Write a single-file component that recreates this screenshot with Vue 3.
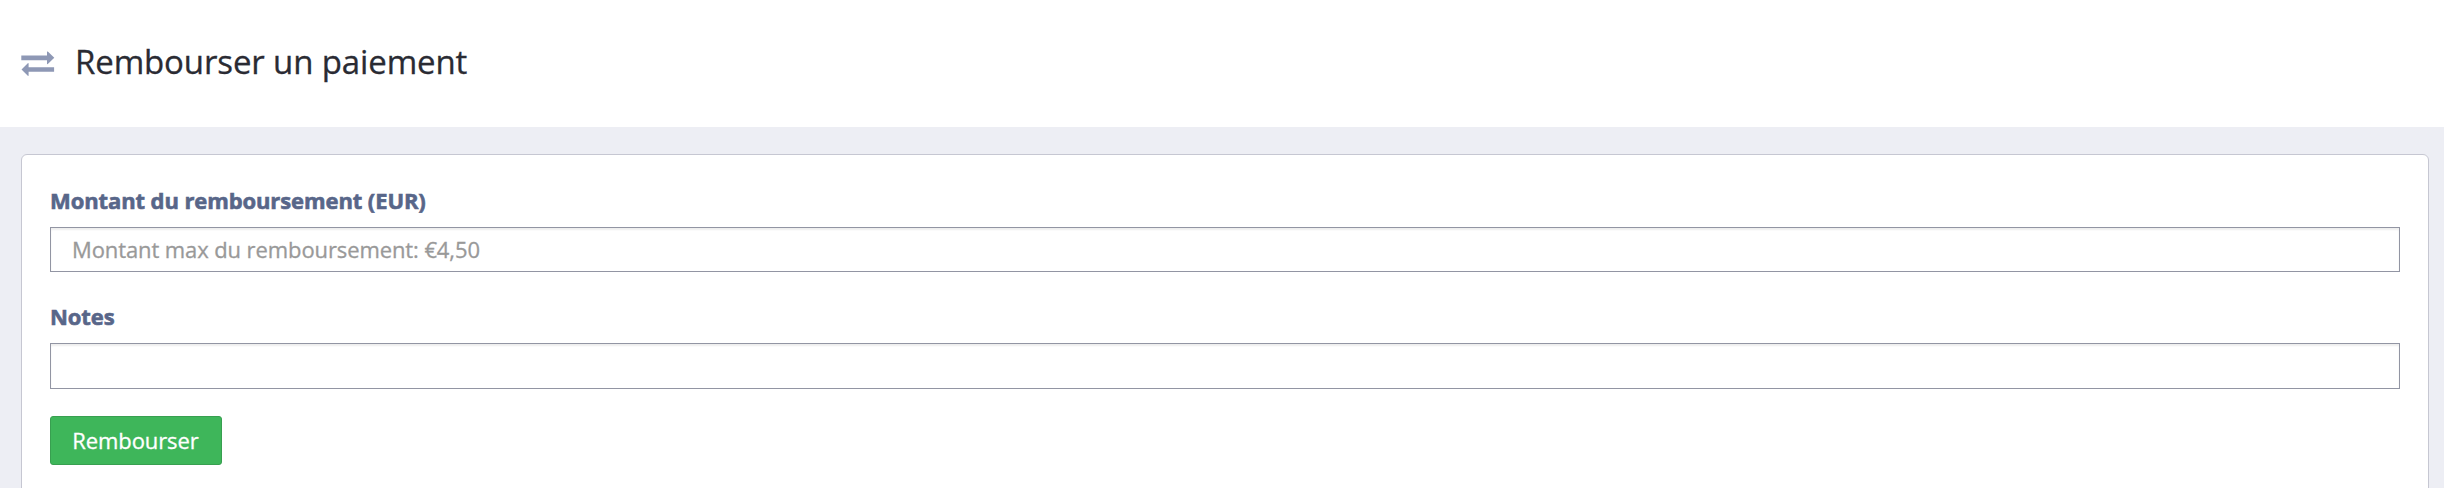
<script setup>
import { ref } from 'vue'

const amount = ref('')
const notes = ref('')
</script>

<template>
  <div class="page">
    <header class="header">
      <svg class="icon" width="34" height="28" viewBox="0 0 34 28" aria-hidden="true">
        <path d="M0.3 4.6H26V0.9Q26 0.1 26.8 0.6L33.3 6.8L26.8 13Q26 13.4 26 12.6V9.2H0.3Z" />
        <path d="M33.1 16.2H7.6V12.5Q7.6 11.7 6.8 12.2L0.5 18.5L6.8 24.7Q7.6 25.2 7.6 24.3V20.8H33.1Z" />
      </svg>
      <h1 class="title">Rembourser un paiement</h1>
    </header>
    <main class="content">
      <form class="card" @submit.prevent>
        <label class="label" for="amount">Montant du remboursement (EUR)</label>
        <input id="amount" v-model="amount" class="field amount" type="text" placeholder="Montant max du remboursement: €4,50" />
        <label class="label notes-label" for="notes">Notes</label>
        <input id="notes" v-model="notes" class="field notes" type="text" />
        <button class="submit" type="submit">Rembourser</button>
      </form>
    </main>
  </div>
</template>

<style>
body {
  overflow: hidden;
}
</style>

<style scoped>
.page {
  box-sizing: border-box;
  display: flex;
  flex-direction: column;
  height: 488px;
  overflow: hidden;
  background: #edeef4;
  font-family: "Open Sans", "Noto Sans", sans-serif;
  font-size: 22px;
  -webkit-text-stroke: 0.3px;
}
.header {
  box-sizing: border-box;
  display: flex;
  flex: none;
  align-items: center;
  gap: 20px;
  height: 127px;
  padding: 0 21px 1px;
  background: #fff;
}
.icon {
  flex: none;
  margin-top: 4px;
  fill: #8e98b5;
}
.title {
  margin: 0 0 2px;
  color: #2a2b33;
  font-size: 33px;
  font-weight: 400;
  letter-spacing: -0.13px;
  line-height: 46px;
  white-space: nowrap;
}
.content {
  flex: 1;
  padding: 27px 15px 0 21px;
}
.card {
  box-sizing: border-box;
  display: flex;
  flex-direction: column;
  height: 400px;
  padding: 30px 28px;
  border: 1px solid #c6c7d2;
  border-radius: 6px;
  background: #fff;
}
.label {
  height: 30px;
  color: #586689;
  font-weight: 700;
  letter-spacing: -0.1px;
  line-height: 30px;
  -webkit-text-stroke: 0.6px;
}
.field {
  box-sizing: border-box;
  width: 100%;
  margin: 12px 0 0;
  padding: 0 21px 2px;
  border: 1px solid #9295a3;
  border-radius: 0;
  outline: none;
  background: #fff;
  box-shadow: inset 0 2px 2px rgba(0, 0, 0, 0.07);
  color: #555;
  font: inherit;
  letter-spacing: -0.1px;
}
.field::placeholder {
  color: #999;
  opacity: 1;
}
.amount {
  height: 45px;
}
.notes {
  height: 46px;
}
.notes-label {
  margin-top: 29px;
}
.submit {
  box-sizing: border-box;
  width: 172px;
  height: 49px;
  margin-top: 27px;
  padding: 0 1px 1px 0;
  border: 1px solid #389f50;
  border-radius: 3px;
  background: #3eb65a;
  color: #fff;
  font: inherit;
  letter-spacing: -0.1px;
}
</style>
